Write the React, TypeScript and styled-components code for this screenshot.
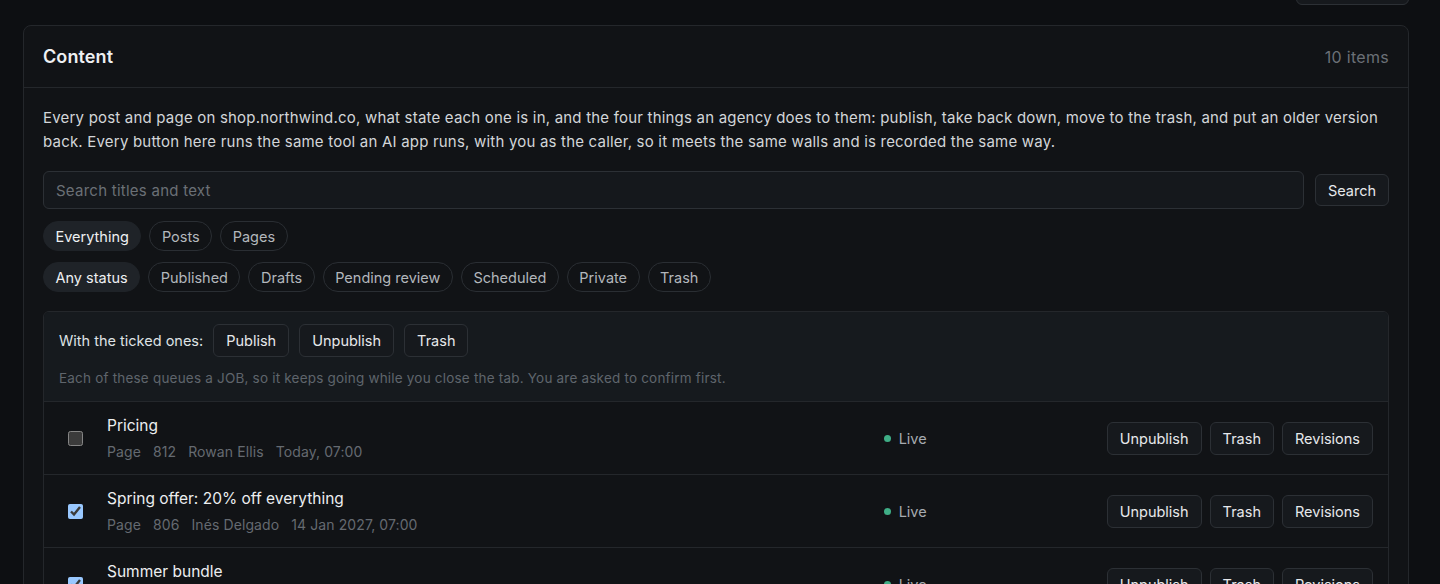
import React from "react";
import styled, { createGlobalStyle } from "styled-components";

const Global = createGlobalStyle`
  html, body {
    margin: 0;
    background: #0d0f12;
    color: #e4e6e9;
    font-family: "Inter", "Noto Sans", sans-serif;
    color-scheme: dark;
  }
  * { box-sizing: border-box; }
`;

const Page = styled.div`
  padding: 0 31px 40px 23px;
  overflow: hidden;
  height: 584px;
`;

const TopBar = styled.div`
  display: flex;
  justify-content: flex-end;
  margin-top: -29px;
  margin-bottom: 20px;
`;

const Card = styled.section`
  background: #111316;
  border: 1px solid #24272b;
  border-radius: 8px;
`;

const CardHead = styled.header`
  display: flex;
  align-items: center;
  justify-content: space-between;
  height: 62px;
  padding: 0 19px;
  border-bottom: 1px solid #24272b;
`;

const Title = styled.h2`
  margin: 0;
  font-size: 18px;
  font-weight: 600;
  color: #eef0f2;
  letter-spacing: 0.1px;
`;

const Count = styled.span`
  font-size: 16px;
  color: #6b7076;
  letter-spacing: 0.3px;
`;

const CardBody = styled.div`
  padding: 18px 19px 20px;
`;

const Lead = styled.p`
  margin: 0 0 17px;
  font-size: 15px;
  line-height: 24px;
  color: #d3d6d9;
  letter-spacing: 0.2px;
`;

const SearchRow = styled.form`
  display: flex;
  align-items: center;
  gap: 11px;
  margin-bottom: 12px;
`;

const SearchInput = styled.input`
  flex: 1;
  height: 38px;
  padding: 0 12px;
  background: #15181c;
  border: 1px solid #2c3035;
  border-radius: 6px;
  color: #e4e6e9;
  font: inherit;
  font-size: 15px;
  letter-spacing: 0.25px;
  &::placeholder { color: #6b7076; }
`;

const Button = styled.button<{ $tall?: boolean }>`
  height: ${(p) => (p.$tall ? 34 : 33)}px;
  padding: 0 12px;
  background: #16191d;
  border: 1px solid #2c3035;
  border-radius: 6px;
  color: #e6e8eb;
  font: inherit;
  font-size: 14.5px;
  white-space: nowrap;
`;

const Chips = styled.div`
  display: flex;
  gap: 8px;
  margin-bottom: 11px;
`;

const Chip = styled.button<{ $on?: boolean }>`
  height: 30px;
  padding: 0 11.5px;
  border-radius: 15px;
  border: 1px solid ${(p) => (p.$on ? "#1f2328" : "#2a2e33")};
  background: ${(p) => (p.$on ? "#1f2328" : "transparent")};
  color: ${(p) => (p.$on ? "#eef0f2" : "#b3b7bc")};
  font: inherit;
  font-size: 14.5px;
`;

const List = styled.div`
  margin-top: 19px;
  border: 1px solid #24272b;
  border-radius: 6px;
  overflow: hidden;
`;

const Bulk = styled.div`
  background: #161a1e;
  padding: 12px 15px 13px;
  border-bottom: 1px solid #24272b;
`;

const BulkBar = styled.div`
  display: flex;
  align-items: center;
  gap: 10px;
`;

const BulkLabel = styled.span`
  font-size: 14.5px;
  color: #dfe2e5;
`;

const Hint = styled.p`
  margin: 11px 0 0;
  font-size: 13.5px;
  line-height: 20px;
  color: #5f656c;
  letter-spacing: 0.2px;
`;

const Row = styled.div`
  display: flex;
  align-items: center;
  padding: 13px 15px 12px 24px;
  border-bottom: 1px solid #24272b;
`;

const Tick = styled.input`
  width: 15px;
  height: 15px;
  margin: 0 24px 0 0;
  flex: none;
`;

const Main = styled.div`
  flex: 1;
  min-width: 0;
`;

const ItemTitle = styled.div`
  font-size: 15.5px;
  line-height: 22px;
  color: #eceef0;
`;

const Meta = styled.div`
  display: flex;
  gap: 12px;
  margin-top: 5px;
  font-size: 14px;
  line-height: 20px;
  color: #656a71;
  letter-spacing: 0.1px;
`;

const Status = styled.div`
  width: 223px;
  display: flex;
  align-items: center;
  gap: 8px;
  font-size: 14.5px;
  color: #a7abb0;
`;

const Dot = styled.span<{ $color: string }>`
  width: 7px;
  height: 7px;
  border-radius: 50%;
  background: ${(p) => p.$color};
`;

const Actions = styled.div`
  display: flex;
  gap: 8px;
`;

type Item = {
  title: string;
  kind: string;
  id: string;
  author: string;
  when: string;
  ticked: boolean;
};

const items: Item[] = [
  { title: "Pricing", kind: "Page", id: "812", author: "Rowan Ellis", when: "Today, 07:00", ticked: false },
  { title: "Spring offer: 20% off everything", kind: "Page", id: "806", author: "Inés Delgado", when: "14 Jan 2027, 07:00", ticked: true },
  { title: "Summer bundle", kind: "Post", id: "801", author: "Rowan Ellis", when: "12 Jan 2027, 07:00", ticked: true },
];

const types = ["Everything", "Posts", "Pages"];
const statuses = ["Any status", "Published", "Drafts", "Pending review", "Scheduled", "Private", "Trash"];

export default function App() {
  return (
    <Page>
      <Global />
      <TopBar>
        <Button $tall style={{ width: 113 }}>New post</Button>
      </TopBar>
      <Card>
        <CardHead>
          <Title>Content</Title>
          <Count>10 items</Count>
        </CardHead>
        <CardBody>
          <Lead>
            Every post and page on shop.northwind.co, what state each one is in, and the four things an agency
            does to them: publish, take back down, move to the trash, and put an older version back. Every button
            here runs the same tool an AI app runs, with you as the caller, so it meets the same walls and is
            recorded the same way.
          </Lead>
          <SearchRow onSubmit={(e) => e.preventDefault()}>
            <SearchInput placeholder="Search titles and text" />
            <Button type="submit" style={{ height: 32 }}>Search</Button>
          </SearchRow>
          <Chips>
            {types.map((t, i) => (
              <Chip key={t} $on={i === 0}>{t}</Chip>
            ))}
          </Chips>
          <Chips>
            {statuses.map((s, i) => (
              <Chip key={s} $on={i === 0}>{s}</Chip>
            ))}
          </Chips>
          <List>
            <Bulk>
              <BulkBar>
                <BulkLabel>With the ticked ones:</BulkLabel>
                <Button>Publish</Button>
                <Button>Unpublish</Button>
                <Button>Trash</Button>
              </BulkBar>
              <Hint>Each of these queues a JOB, so it keeps going while you close the tab. You are asked to confirm first.</Hint>
            </Bulk>
            {items.map((it) => (
              <Row key={it.id}>
                <Tick type="checkbox" defaultChecked={it.ticked} />
                <Main>
                  <ItemTitle>{it.title}</ItemTitle>
                  <Meta>
                    <span>{it.kind}</span>
                    <span>{it.id}</span>
                    <span>{it.author}</span>
                    <span>{it.when}</span>
                  </Meta>
                </Main>
                <Status>
                  <Dot $color="#3fae86" />
                  Live
                </Status>
                <Actions>
                  <Button>Unpublish</Button>
                  <Button>Trash</Button>
                  <Button>Revisions</Button>
                </Actions>
              </Row>
            ))}
          </List>
        </CardBody>
      </Card>
    </Page>
  );
}
